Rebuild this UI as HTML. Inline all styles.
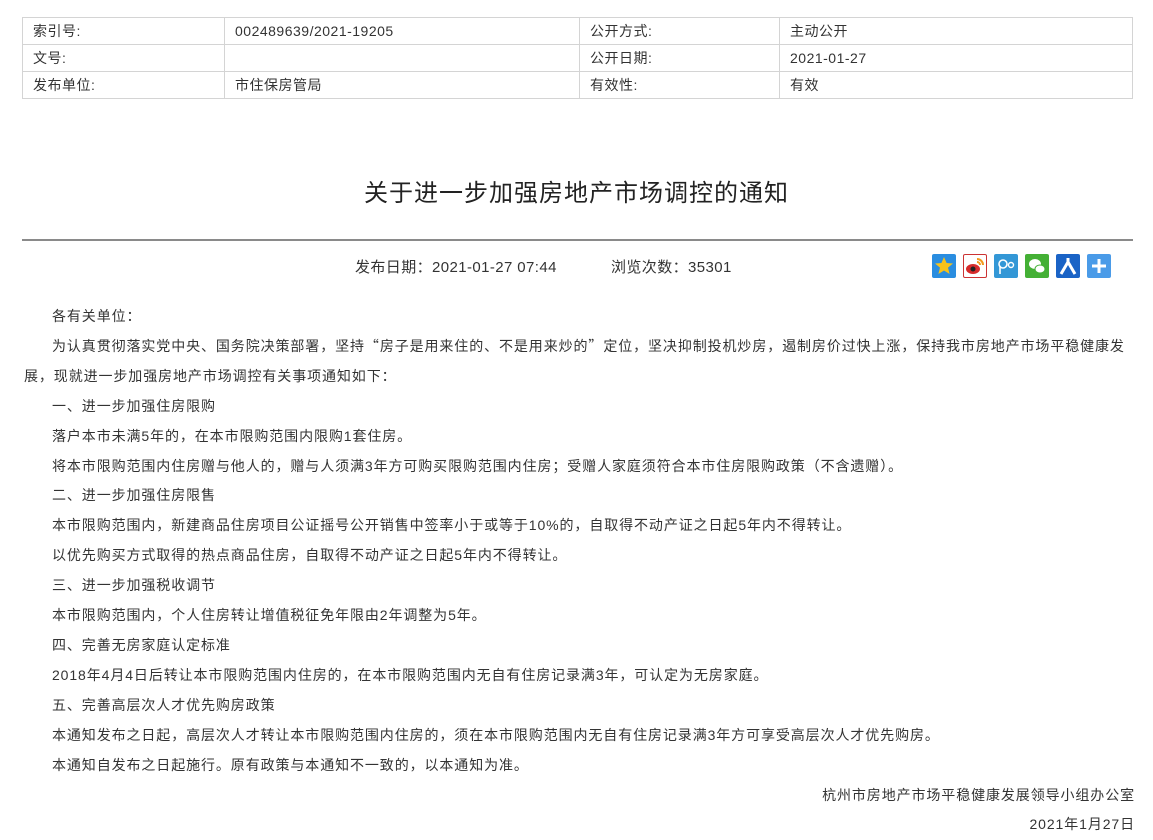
<!DOCTYPE html>
<html><head><meta charset="utf-8"><style>
body{margin:0;background:#fff;font-family:"Liberation Sans","Noto Sans CJK SC",sans-serif;color:#333;width:1153px;height:838px;overflow:hidden;position:relative}
table{position:absolute;left:22px;top:17px;width:1111px;border-collapse:collapse;font-size:14px;letter-spacing:0.5px}
td{border:1px solid #d4d4d4;height:26px;padding:0 0 0 10px;color:#333;line-height:26px}
h1{position:absolute;top:176px;left:0;width:1153px;text-align:center;font-size:24px;font-weight:normal;margin:0;color:#222;line-height:36px;letter-spacing:1px}
.hr{position:absolute;left:22px;top:239px;width:1111px;height:2px;background:#8a8a8a}
.meta{position:absolute;top:256px;font-size:15px;color:#333;line-height:22px;white-space:nowrap;letter-spacing:0.4px}
.icons{position:absolute;top:254px;left:932px}
.ic{position:absolute;width:24px;height:24px;border-radius:2px}
.body{position:absolute;left:24px;top:302px;width:1110px;font-size:14px;line-height:29.9px;color:#333;letter-spacing:0.9px}
.body p{margin:0;text-indent:28px}
.q{font-family:"Noto Sans CJK SC",sans-serif}
.r{text-align:right;text-indent:0!important;margin-right:-1px!important}
</style></head><body>
<table>
<tr><td style="width:191px">索引号:</td><td style="width:344px">002489639/2021-19205</td><td style="width:189px">公开方式:</td><td>主动公开</td></tr>
<tr><td>文号:</td><td></td><td>公开日期:</td><td>2021-01-27</td></tr>
<tr><td>发布单位:</td><td>市住保房管局</td><td>有效性:</td><td>有效</td></tr>
</table>
<h1>关于进一步加强房地产市场调控的通知</h1>
<div class="hr"></div>
<div class="meta" style="left:355px">发布日期<span class="q">：</span>2021-01-27 07:44</div>
<div class="meta" style="left:611px">浏览次数<span class="q">：</span>35301</div>
<div class="icons">
<div class="ic" style="left:0;background:#2a8de0"><svg width="24" height="24"><polygon points="12,3 14.6,9 21,9.5 16,13.6 17.6,20 12,16.5 6.4,20 8,13.6 3,9.5 9.4,9" fill="#f7c21a"/></svg></div>
<div class="ic" style="left:31px;background:#fff;border:1px solid #c33;width:22px;height:22px"><svg width="22" height="22"><ellipse cx="9" cy="14" rx="7" ry="5" fill="#d62b2b"/><circle cx="9" cy="14" r="2.5" fill="#222"/><path d="M13 4a6 6 0 0 1 6 6M13 7a3 3 0 0 1 3 3" stroke="#f39a1e" stroke-width="2" fill="none"/></svg></div>
<div class="ic" style="left:62px;background:#3397d6"><svg width="24" height="24"><circle cx="9" cy="10" r="4" stroke="#fff" stroke-width="1.6" fill="none"/><line x1="6" y1="12" x2="6" y2="20" stroke="#fff" stroke-width="1.6"/><circle cx="17" cy="11" r="2.5" stroke="#fff" stroke-width="1.4" fill="none"/></svg></div>
<div class="ic" style="left:93px;background:#44b035"><svg width="24" height="24"><ellipse cx="10" cy="10" rx="6" ry="5" fill="#fff"/><ellipse cx="15" cy="15" rx="5" ry="4" fill="#fff" stroke="#44b035"/></svg></div>
<div class="ic" style="left:124px;background:#1a63c6"><svg width="24" height="24"><path d="M12 4v4M12 8L5 20M12 8l7 12" stroke="#fff" stroke-width="3" fill="none"/></svg></div>
<div class="ic" style="left:155px;background:#4a9be8"><svg width="24" height="24"><path d="M12 5v14M5 12h14" stroke="#fff" stroke-width="3"/></svg></div>
</div>
<div class="body">
<p>各有关单位<span class="q">：</span></p>
<p>为认真贯彻落实党中央、国务院决策部署，坚持<span class="q">“</span>房子是用来住的、不是用来炒的<span class="q">”</span>定位，坚决抑制投机炒房，遏制房价过快上涨，保持我市房地产市场平稳健康发<br>展，现就进一步加强房地产市场调控有关事项通知如下<span class="q">：</span></p>
<p>一、进一步加强住房限购</p>
<p>落户本市未满5年的，在本市限购范围内限购1套住房。</p>
<p>将本市限购范围内住房赠与他人的，赠与人须满3年方可购买限购范围内住房<span class="q">；</span>受赠人家庭须符合本市住房限购政策<span class="q">（</span>不含遗赠<span class="q">）</span>。</p>
<p>二、进一步加强住房限售</p>
<p>本市限购范围内，新建商品住房项目公证摇号公开销售中签率小于或等于10%的，自取得不动产证之日起5年内不得转让。</p>
<p>以优先购买方式取得的热点商品住房，自取得不动产证之日起5年内不得转让。</p>
<p>三、进一步加强税收调节</p>
<p>本市限购范围内，个人住房转让增值税征免年限由2年调整为5年。</p>
<p>四、完善无房家庭认定标准</p>
<p>2018年4月4日后转让本市限购范围内住房的，在本市限购范围内无自有住房记录满3年，可认定为无房家庭。</p>
<p>五、完善高层次人才优先购房政策</p>
<p>本通知发布之日起，高层次人才转让本市限购范围内住房的，须在本市限购范围内无自有住房记录满3年方可享受高层次人才优先购房。</p>
<p>本通知自发布之日起施行。原有政策与本通知不一致的，以本通知为准。</p>
<p class="r">杭州市房地产市场平稳健康发展领导小组办公室</p>
<p class="r">2021年1月27日</p>
</div>
</body></html>
